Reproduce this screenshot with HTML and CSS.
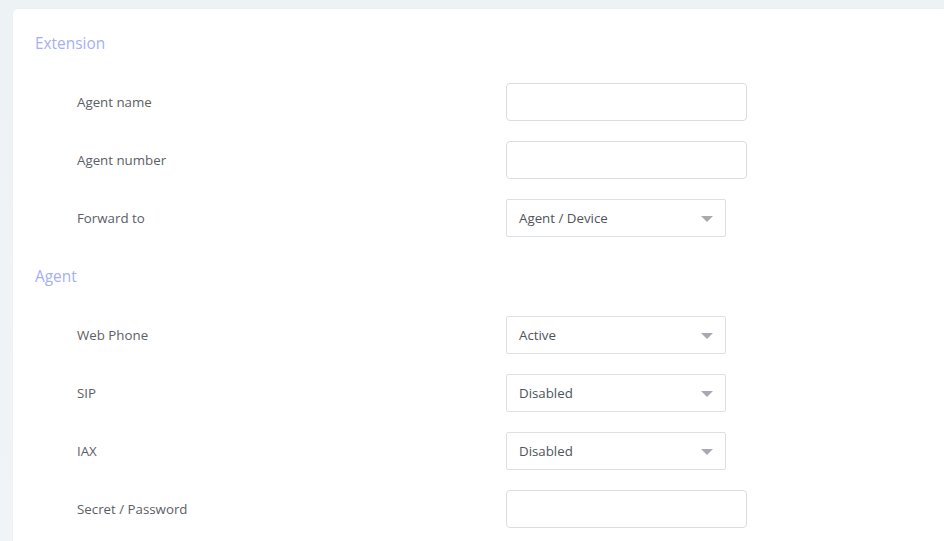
FILE: index.html
```html
<!DOCTYPE html>
<html>
<head>
<meta charset="utf-8">
<link rel="stylesheet" href="styles.css">
</head>
<body>
<div class="card">
  <section class="section">
    <h2 class="section-title">Extension</h2>
    <div class="rows">
      <div class="row"><label class="label">Agent name</label><div class="field input"></div></div>
      <div class="row"><label class="label">Agent number</label><div class="field input"></div></div>
      <div class="row"><label class="label">Forward to</label><div class="field select"><span>Agent / Device</span><i class="arrow"></i></div></div>
    </div>
  </section>
  <section class="section">
    <h2 class="section-title">Agent</h2>
    <div class="rows">
      <div class="row"><label class="label">Web Phone</label><div class="field select"><span>Active</span><i class="arrow"></i></div></div>
      <div class="row"><label class="label">SIP</label><div class="field select"><span>Disabled</span><i class="arrow"></i></div></div>
      <div class="row"><label class="label">IAX</label><div class="field select"><span>Disabled</span><i class="arrow"></i></div></div>
      <div class="row"><label class="label">Secret / Password</label><div class="field input"></div></div>
    </div>
  </section>
</div>
</body>
</html>
```
FILE: styles.css
```css
html, body {
  margin: 0;
  height: 100%;
}
body {
  background: linear-gradient(180deg, #edf2f5 0%, #f1f4f6 100%);
  font-family: "Open Sans", "Noto Sans", sans-serif;
  overflow: hidden;
  padding: 9px 0 0 13px;
  box-sizing: border-box;
}
.card {
  background: #fff;
  border-radius: 5px 0 0 0;
  padding: 25px 0 40px 22px;
  min-height: 700px;
  box-shadow: 0 0 2px rgba(0,0,0,0.03);
}
.section + .section {
  margin-top: 30px;
}
.section-title {
  margin: 0 0 29px;
  font-size: 15.4px;
  line-height: 20px;
  font-weight: 400;
  color: #a5aff3;
}
.rows {
  display: flex;
  flex-direction: column;
  gap: 20px;
  padding-left: 42px;
}
.row {
  display: grid;
  grid-template-columns: 429px auto;
  align-items: center;
}
.label {
  font-size: 13.3px;
  color: #5b6066;
  line-height: 18px;
}
.field {
  box-sizing: border-box;
  height: 38px;
  background: #fff;
}
.input {
  width: 241px;
  border: 1px solid #d9dde2;
  border-radius: 4px;
}
.select {
  width: 220px;
  border: 1px solid #dcdfe3;
  border-radius: 2px;
  display: flex;
  align-items: center;
  justify-content: space-between;
  padding: 0 12px 0 12px;
  font-size: 13.3px;
  color: #4f545a;
}
.arrow {
  width: 0;
  height: 0;
  border-left: 6px solid transparent;
  border-right: 6px solid transparent;
  border-top: 6px solid #a7abb1;
  margin-top: 1px;
}
```
